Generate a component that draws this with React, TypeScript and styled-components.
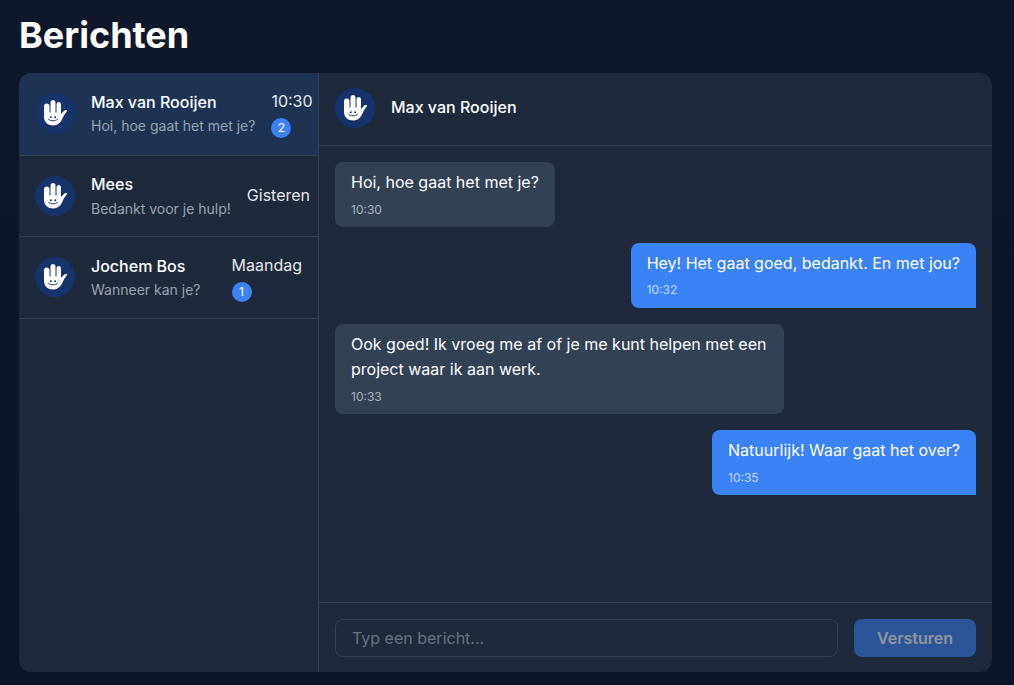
import React from "react";
import styled, { createGlobalStyle } from "styled-components";

const GlobalStyle = createGlobalStyle`
    * { box-sizing: border-box; }
    html, body { margin: 0; padding: 0; height: 100%; }
    body {
        background: linear-gradient(180deg, #0f172a 0%, #0a1628 100%);
        color: #fff;
        font-family: "Inter", "Liberation Sans", sans-serif;
    }
`;

const conversations = [
    { name: "Max van Rooijen", preview: "Hoi, hoe gaat het met je?", time: "10:30", unread: 2, active: true },
    { name: "Mees", preview: "Bedankt voor je hulp!", time: "Gisteren", unread: 0, active: false },
    { name: "Jochem Bos", preview: "Wanneer kan je?", time: "Maandag", unread: 1, active: false },
];

const messages = [
    { text: "Hoi, hoe gaat het met je?", time: "10:30", mine: false },
    { text: "Hey! Het gaat goed, bedankt. En met jou?", time: "10:32", mine: true },
    { text: "Ook goed! Ik vroeg me af of je me kunt helpen met een project waar ik aan werk.", time: "10:33", mine: false },
    { text: "Natuurlijk! Waar gaat het over?", time: "10:35", mine: true },
];

const HandAvatar = () => (
    <Avatar>
        <svg width="40" height="40" viewBox="0 0 40 40" fill="none">
            <path
                d="M9 13c0-1.500 1.200-2.600 2.700-2.600s2.800 1.100 2.800 2.600v6.500h1V9.600C15.500 8.100 16.600 7 18 7s2.500 1.100 2.500 2.600v9.900h1v-8c0-1.500 1-2.500 2.250-2.500S26 10 26 11.500V21l2.800-3c.9-.9 2.200-1.400 3-.9.5.3.3 1-.3 1.700-1.900 2.200-3.200 4.900-4.300 7.300-1.500 3.500-4.300 6.400-8.700 6.400-5.500 0-9.500-3.500-9.500-8.500V13z"
                fill="#fff"
            />
            <circle cx="15.800" cy="24.300" r="1" fill="#16336b" />
            <circle cx="20.200" cy="24.300" r="1" fill="#16336b" />
            <path d="M13.500 26.300c2 2.100 7 2.100 9 0" stroke="#16336b" strokeWidth="1" strokeLinecap="round" />
        </svg>
    </Avatar>
);

const App = () => {
    return <Page>
        <GlobalStyle />
        <Title>Berichten</Title>
        <Panel>
            <Sidebar>
                {conversations.map((c) => {
                    return <ConversationItem key={c.name} $active={c.active}>
                        <HandAvatar />
                        <ConversationText>
                            <Name>{c.name}</Name>
                            <Preview>{c.preview}</Preview>
                        </ConversationText>
                        <Meta>
                            <Time>{c.time}</Time>
                            {c.unread > 0 && <Badge>{c.unread}</Badge>}
                        </Meta>
                    </ConversationItem>
                })}
            </Sidebar>
            <Chat>
                <ChatHeader>
                    <HandAvatar />
                    <Name>Max van Rooijen</Name>
                </ChatHeader>
                <Messages>
                    {messages.map((m) => {
                        return <Bubble key={m.time} $mine={m.mine}>
                            <BubbleText>{m.text}</BubbleText>
                            <BubbleTime $mine={m.mine}>{m.time}</BubbleTime>
                        </Bubble>
                    })}
                </Messages>
                <Composer>
                    <MessageInput placeholder="Typ een bericht..." />
                    <SendButton>Versturen</SendButton>
                </Composer>
            </Chat>
        </Panel>
    </Page>
}

const Page = styled.div`
    display: flex;
    flex-direction: column;
    height: 685px;
    padding: 13px 22px 13px 19px;
`

const Title = styled.h1`
    margin: 0 0 16px;
    height: 44px;
    font-size: 36px;
    line-height: 44px;
    font-weight: 700;
    color: #fff;
`

const Panel = styled.div`
    flex: 1;
    display: flex;
    min-height: 0;
    background-color: #1e293b;
    border-radius: 12px;
    overflow: hidden;
`

const Sidebar = styled.div`
    width: 300px;
    flex-shrink: 0;
    border-right: 1px solid #334155;
`

const ConversationItem = styled.div<{ $active: boolean }>`
    display: flex;
    align-items: center;
    padding: 16px;
    border-bottom: 1px solid #334155;
    background-color: ${(props) => (props.$active ? "#1e3354" : "transparent")};

    &:first-child {
        padding-bottom: 17px;
    }
`

const Avatar = styled.div`
    flex-shrink: 0;
    width: 40px;
    height: 40px;
    margin-right: 16px;
    border-radius: 50%;
    background-color: #16336b;
`

const ConversationText = styled.div`
    flex: 1;
    display: flex;
    flex-direction: column;
    justify-content: center;
    min-height: 48.6px;
    white-space: nowrap;
`

const Name = styled.div`
    font-size: 16px;
    line-height: 25.6px;
    font-weight: 500;
    color: #fff;
`

const Preview = styled.div`
    font-size: 14px;
    line-height: 22px;
    color: #9ca3af;
`

const Meta = styled.div`
    display: flex;
    flex-direction: column;
    align-items: flex-start;
    flex-shrink: 0;
    gap: 3px;
    margin-left: 16px;
`

const Time = styled.div`
    font-size: 16px;
    line-height: 25.6px;
    color: #e5e7eb;
`

const Badge = styled.div`
    display: flex;
    align-items: center;
    justify-content: center;
    width: 20px;
    height: 20px;
    border-radius: 50%;
    background-color: #3b82f6;
    font-size: 12px;
    color: #fff;
`

const Chat = styled.div`
    flex: 1;
    display: flex;
    flex-direction: column;
    min-width: 0;
`

const ChatHeader = styled.div`
    display: flex;
    align-items: center;
    height: 73px;
    padding: 15px 16px 17px;
    border-bottom: 1px solid #334155;
`

const Messages = styled.div`
    flex: 1;
    display: flex;
    flex-direction: column;
    gap: 16px;
    padding: 16px;
`

const Bubble = styled.div<{ $mine: boolean }>`
    align-self: ${(props) => (props.$mine ? "flex-end" : "flex-start")};
    max-width: 70%;
    padding: 8px 16px;
    border-radius: 8px;
    border-bottom-right-radius: ${(props) => (props.$mine ? "0" : "8px")};
    background-color: ${(props) => (props.$mine ? "#3b82f6" : "#334155")};
`

const BubbleText = styled.div`
    font-size: 16px;
    line-height: 25.6px;
    color: #fff;
`

const BubbleTime = styled.div<{ $mine: boolean }>`
    margin-top: 4px;
    font-size: 12px;
    line-height: 19.2px;
    color: ${(props) => (props.$mine ? "#bfdbfe" : "#aab2bd")};
`

const Composer = styled.div`
    display: flex;
    gap: 16px;
    height: 70px;
    padding: 16px;
    border-top: 1px solid #334155;
`

const MessageInput = styled.input`
    flex: 1;
    min-width: 0;
    height: 38px;
    padding: 0 16px;
    border: 1px solid #334155;
    border-radius: 8px;
    outline: none;
    background-color: #1e293b;
    font-family: inherit;
    font-size: 16px;
    color: #fff;

    &::placeholder {
        color: #6b7280;
    }
`

const SendButton = styled.button`
    width: 122px;
    height: 38px;
    border: none;
    border-radius: 8px;
    background-color: #3b82f6;
    opacity: 0.5;
    font-family: inherit;
    font-size: 16px;
    font-weight: 600;
    color: #fff;
`

export default App;
